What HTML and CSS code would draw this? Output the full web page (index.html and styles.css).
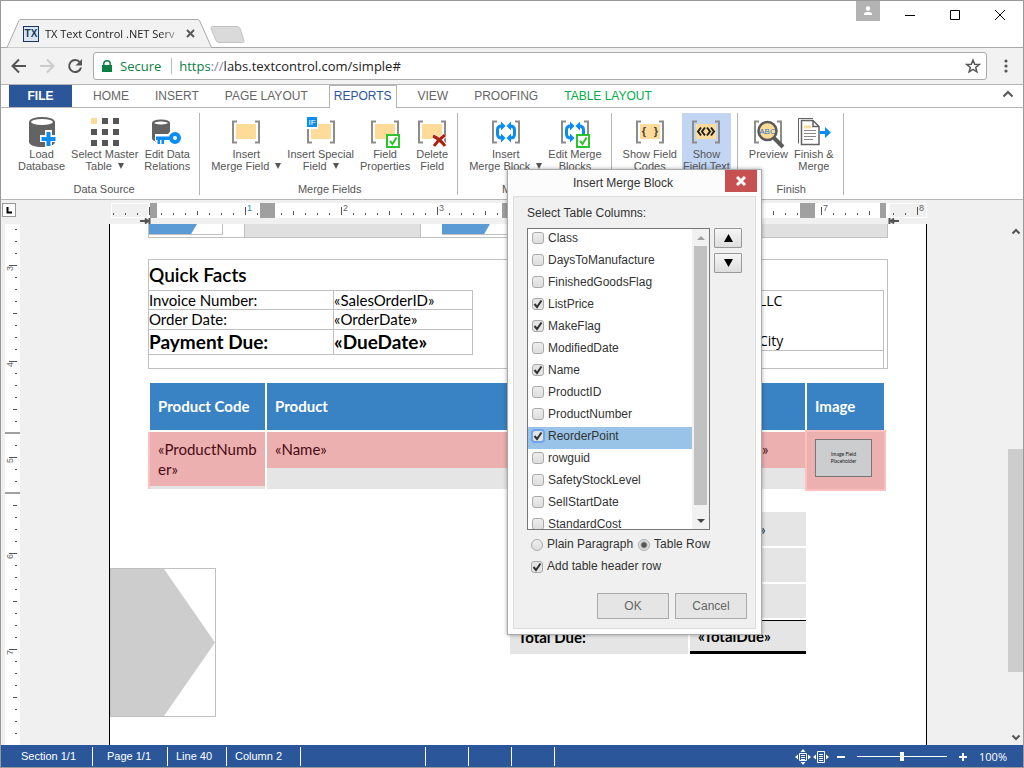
FILE: index.html
```html
<!DOCTYPE html>
<html lang="en">
<head>
  <meta charset="UTF-8">
  <meta name="viewport" content="width=device-width, initial-scale=1.0">
  <title>TX Text Control .NET Server</title>
  <link rel="stylesheet" href="styles.css">
</head>
<body>
  <svg class="defs" width="0" height="0" aria-hidden="true">
    <symbol id="brackets" viewBox="0 0 32 32">
      <path d="M7 5.500H3V26.500H7M25 5.500H29V26.500H25" fill="none" stroke="#8c8c8c" stroke-width="2"/>
    </symbol>
    <symbol id="field" viewBox="0 0 32 32">
      <use href="#brackets"/>
      <path d="M6 8h20v15H6z" fill="#ffdb99"/>
    </symbol>
    <symbol id="tickbox" viewBox="0 0 32 32">
      <path d="M18 19h12v12H18z" fill="#fff" stroke="#2ec22e" stroke-width="2"/>
      <path d="M21 25l2.500 3 4-6.500" fill="none" stroke="#2ec22e" stroke-width="2"/>
    </symbol>
    <symbol id="cycle" viewBox="0 0 32 32">
      <use href="#brackets"/>
      <path d="M12 22q-4.500 0-4.500-4v-4q0-4 4-4h1M20 10q4.500 0 4.500 4v4q0 4-4 4h-1" fill="none" stroke="#0a8cf0" stroke-width="3"/>
      <path d="M11 5.500l4.500 4.500-4.500 4.500zM21 17.500L16.500 22l4.500 4.500zM11 17.500l4.500 4.500-4.500 4.500zM21 5.500L16.500 10l4.500 4.500z" fill="#0a8cf0"/>
    </symbol>
    <symbol id="database" viewBox="0 0 32 32">
      <path d="M3 6v20c0 3 6 5 13 5s13-2 13-5V6z" fill="#636363"/>
      <ellipse cx="16" cy="6" rx="12" ry="4" fill="#fff" stroke="#636363" stroke-width="2"/>
    </symbol>
  </svg>

  <div class="window">
    <div class="titlebar">
      <div class="tab">
        <svg class="tab-shape" width="206" height="29" viewBox="0 0 206 29"><path d="M0 28.500h1L13 1.500Q13.500.5 15 .5h176q2 0 2.500 1l12 27" fill="#f2f2f2" stroke="#a9a9a9"/></svg>
        <span class="favicon">TX</span>
        <span class="tab-title">TX Text Control .NET Serv</span>
        <button class="tab-close" aria-label="Close tab"><svg width="9" height="9" viewBox="0 0 9 9"><path d="M1 1l7 7M8 1l-7 7" stroke="#5a5a5a" stroke-width="2"/></svg></button>
      </div>
      <button class="new-tab" aria-label="New tab"><svg width="36" height="18" viewBox="0 0 36 18"><path d="M3 .5h24q2 0 3 2l4 12q.5 2-1.500 2H9q-2 0-3-2L1 2.500Q.5.5 3 .5z" fill="#dadada" stroke="#c2c2c2"/></svg></button>
      <div class="window-buttons">
        <button class="profile" aria-label="Profile"><svg width="10" height="10" viewBox="0 0 10 10"><circle cx="5" cy="2.500" r="2.200" fill="#fff"/><path d="M1 9V8q0-2 4-2t4 2v1z" fill="#fff"/></svg></button>
        <button aria-label="Minimize"><svg width="10" height="10"><path d="M0 5.500h10" stroke="#000"/></svg></button>
        <button aria-label="Maximize"><svg width="10" height="10"><path d="M.5.5h9v9h-9z" fill="none" stroke="#000"/></svg></button>
        <button aria-label="Close"><svg width="10" height="10"><path d="M0 0l10 10M10 0L0 10" stroke="#000"/></svg></button>
      </div>
    </div>

    <div class="toolbar">
      <button aria-label="Back"><svg width="16" height="16" viewBox="0 0 16 16"><path d="M15 8H2M8 1.500L1.500 8 8 14.500" fill="none" stroke="#555" stroke-width="2"/></svg></button>
      <button aria-label="Forward"><svg width="16" height="16" viewBox="0 0 16 16"><path d="M1 8h13M8 1.500L14.500 8 8 14.500" fill="none" stroke="#ccc" stroke-width="2"/></svg></button>
      <button aria-label="Reload"><svg width="16" height="16" viewBox="0 0 16 16"><path d="M13 4.500A6 6 0 1 0 14 9.500" fill="none" stroke="#555" stroke-width="2"/><path d="M15 1v6.500H8.500z" fill="#555"/></svg></button>
      <div class="address">
        <svg width="10" height="12" viewBox="0 0 10 12"><path d="M0 5h1V4q0-4 4-4t4 4v1h1v7H0zM2.500 5h5V4q0-2.500-2.500-2.500T2.500 4z" fill="#0b8043"/></svg>
        <span class="secure">Secure</span>
        <label class="scheme" for="url">https<i>://</i></label>
        <input id="url" type="text" value="labs.textcontrol.com/simple#">
        <button aria-label="Bookmark"><svg width="16" height="16" viewBox="0 0 16 16"><path d="M8 2l1.700 4.200 4.500.3-3.500 2.900 1.200 4.400L8 11.400l-3.900 2.400 1.200-4.400L1.800 6.500l4.500-.3z" fill="none" stroke="#555" stroke-width="1.500"/></svg></button>
      </div>
      <button class="more" aria-label="Menu"><svg width="4" height="14" viewBox="0 0 4 14"><circle cx="2" cy="2" r="1.600" fill="#555"/><circle cx="2" cy="7" r="1.600" fill="#555"/><circle cx="2" cy="12" r="1.600" fill="#555"/></svg></button>
    </div>

    <nav class="ribbon-tabs">
      <a class="file" href="#">FILE</a>
      <a href="#">HOME</a>
      <a href="#">INSERT</a>
      <a href="#">PAGE LAYOUT</a>
      <a class="active" href="#">REPORTS</a>
      <a href="#">VIEW</a>
      <a href="#">PROOFING</a>
      <a class="context" href="#">TABLE LAYOUT</a>
      <button class="collapse" aria-label="Collapse ribbon"><svg width="12" height="8" viewBox="0 0 12 8"><path d="M1.500 6.500L6 2l4.500 4.500" fill="none" stroke="#555" stroke-width="2"/></svg></button>
    </nav>

    <div class="ribbon">
      <section class="group">
        <div class="tools">
          <button class="tool">
            <svg class="icon" viewBox="0 0 32 32"><use href="#database"/><path d="M19 14h7v5h5v7h-5v5h-7v-5h-5v-7h5z" fill="#fff"/><path d="M20.500 16h4v5h5v4h-5v5h-4v-5h-5v-4h5z" fill="#0a8cf0"/></svg>
            Load<br>Database
          </button>
          <button class="tool">
            <svg class="icon" viewBox="0 0 32 32"><path d="M2 2h6v6H2z" fill="#ffdb99"/><path d="M13 2h6v6h-6zM24 2h6v6h-6zM2 13h6v6H2zM13 13h6v6h-6zM24 13h6v6h-6zM2 24h6v6H2zM13 24h6v6h-6zM24 24h6v6h-6z" fill="#555"/></svg>
            Select Master<br>Table <i class="caret"></i>
          </button>
          <button class="tool">
            <svg class="icon" viewBox="0 0 32 32"><path d="M1 7v15c0 3 4 4 9 4s9-1 9-4V7z" fill="#636363"/><ellipse cx="10" cy="7" rx="8" ry="2.500" fill="#fff" stroke="#636363" stroke-width="2"/><path d="M4 18h13a7.500 7.500 0 1 1 0 8h-2v4H5v-5H4z" fill="#fff"/><circle cx="24" cy="22" r="4" fill="none" stroke="#0a8cf0" stroke-width="4"/><path d="M5 20.500h15v3.500h-7v4h-2.500v-4H9v4H6.500v-4H5z" fill="#0a8cf0"/></svg>
            Edit Data<br>Relations
          </button>
        </div>
        <h2>Data Source</h2>
      </section>

      <section class="group">
        <div class="tools">
          <button class="tool">
            <svg class="icon" viewBox="0 0 32 32"><use href="#field"/></svg>
            Insert<br>Merge Field <i class="caret"></i>
          </button>
          <button class="tool">
            <svg class="icon" viewBox="0 0 32 32"><use href="#field"/><path d="M1 0h12v13H1z" fill="#fff"/><path d="M2 1h10v10H2z" fill="#0a8cf0"/><text x="7" y="9" class="icon-if">IF</text></svg>
            Insert Special<br>Field <i class="caret"></i>
          </button>
          <button class="tool">
            <svg class="icon" viewBox="0 0 32 32"><use href="#field"/><use href="#tickbox"/></svg>
            Field<br>Properties
          </button>
          <button class="tool">
            <svg class="icon" viewBox="0 0 32 32"><use href="#field"/><path d="M17 20q7 3 12 10M29 19q-6 4-11 11" fill="none" stroke="#fff" stroke-width="5"/><path d="M17 20q7 3 12 10M29 19q-6 4-11 11" fill="none" stroke="#b02010" stroke-width="3"/></svg>
            Delete<br>Field
          </button>
        </div>
        <h2>Merge Fields</h2>
      </section>

      <section class="group">
        <div class="tools">
          <button class="tool">
            <svg class="icon" viewBox="0 0 32 32"><use href="#cycle"/></svg>
            Insert<br>Merge Block <i class="caret"></i>
          </button>
          <button class="tool">
            <svg class="icon" viewBox="0 0 32 32"><use href="#cycle"/><use href="#tickbox"/></svg>
            Edit Merge<br>Blocks
          </button>
        </div>
        <h2>Merge Blocks</h2>
      </section>

      <section class="group">
        <div class="tools">
          <button class="tool">
            <svg class="icon" viewBox="0 0 32 32"><use href="#field"/><text x="10" y="19" class="icon-code">{</text><text x="22" y="19" class="icon-code">}</text></svg>
            Show Field<br>Codes
          </button>
          <button class="tool pressed">
            <svg class="icon" viewBox="0 0 32 32"><use href="#field"/><path d="M15 11.500l-3 4 3 4M11 11.500l-3 4 3 4M17 11.500l3 4-3 4M21 11.500l3 4-3 4" fill="none" stroke="#222" stroke-width="2"/></svg>
            Show<br>Field Text
          </button>
        </div>
        <h2>View</h2>
      </section>

      <section class="group">
        <div class="tools">
          <button class="tool">
            <svg class="icon" viewBox="0 0 32 32"><use href="#brackets"/><path d="M22 22l9 9" stroke="#5a5a5a" stroke-width="4"/><circle cx="15.500" cy="15" r="9" fill="#ffdb99" stroke="#5a5a5a" stroke-width="2.500"/><text x="15.500" y="18" class="icon-abc">ABC</text></svg>
            Preview
          </button>
          <button class="tool">
            <svg class="icon" viewBox="0 0 32 32"><path d="M.5 27.500V2.500H15" fill="none" stroke="#636363"/><path d="M3.500 4.500H15l6 6v18h-17.500z" fill="#fff" stroke="#636363" stroke-width="1.500"/><path d="M15 4.500v6h6" fill="none" stroke="#636363" stroke-width="1.500"/><path d="M6 11h7" stroke="#ffdb99" stroke-width="3"/><path d="M6 14.500h12M6 17.500h12M6 20.500h12M6 23.500h9" stroke="#888"/><path d="M22 15h5v-4l6 5.500-6 5.500v-4h-5z" fill="#0a8cf0"/></svg>
            Finish &amp;<br>Merge
          </button>
        </div>
        <h2>Finish</h2>
      </section>
    </div>

    <div class="ruler-row">
      <button class="tab-stop" aria-label="Tab stop"><svg width="7" height="7"><path d="M1.500 0v5.500H6" fill="none" stroke="#000" stroke-width="2"/></svg></button>
      <div class="ruler-holder">
        <svg class="ruler" width="816" height="21" viewBox="0 0 816 21">
          <defs>
            <pattern id="inch" x="38" y="0" width="96" height="15" patternUnits="userSpaceOnUse">
              <path d="M.5 4v8M12.500 10v2M24.500 10v2M36.500 10v2M48.500 8v4M60.500 10v2M72.500 10v2M84.500 10v2" stroke="#555"/>
            </pattern>
          </defs>
          <path d="M0 0h816v15H0z" fill="#fff"/>
          <path d="M1 1h36v13H1zM779 1h36v13h-36z" fill="#f0f0f0"/>
          <path d="M0 0h816v15H0z" fill="url(#inch)"/>
          <path d="M39 0h7v15h-7zM149 0h15v15h-15zM391 0h15v15h-15zM689 0h15v15h-15zM769 0h6v15h-6z" fill="#a0a0a0"/>
          <text x="136" y="8" class="ruler-num blue">1</text>
          <text x="232" y="8" class="ruler-num">2</text>
          <text x="328" y="8" class="ruler-num">3</text>
          <text x="712" y="8" class="ruler-num">7</text>
          <text x="808" y="8" class="ruler-num">8</text>
          <path d="M29 18h8M34 15.500l3 2.500-3 2.500M38.500 15v6M778.500 15v6M780 18h8M783 15.500l-3 2.500 3 2.500" fill="none" stroke="#555" stroke-width="2"/>
        </svg>
      </div>
    </div>

    <main class="editor">
      <svg class="side-ruler" width="15" height="100%">
        <defs>
          <pattern id="side-inch" x="0" y="41" width="15" height="96" patternUnits="userSpaceOnUse">
            <path d="M4 .5h8M10 12.500h2M10 24.500h2M10 36.500h2M8 48.500h4M10 60.500h2M10 72.500h2M10 84.500h2" stroke="#555"/>
          </pattern>
        </defs>
        <rect width="15" height="100%" fill="#fff"/>
        <rect width="15" height="100%" fill="url(#side-inch)"/>
        <path d="M0 209h15M0 269h15" stroke="#a0a0a0" stroke-width="2"/>
        <text transform="translate(8 47) rotate(-90)" class="ruler-num">3</text>
        <text transform="translate(8 143) rotate(-90)" class="ruler-num">4</text>
        <text transform="translate(8 239) rotate(-90)" class="ruler-num">5</text>
        <text transform="translate(8 335) rotate(-90)" class="ruler-num">6</text>
        <text transform="translate(8 431) rotate(-90)" class="ruler-num">7</text>
      </svg>

      <div class="canvas">
        <article class="page">
          <div class="strip">
            <span class="strip-logo"></span>
            <span class="strip-cell"></span>
            <span class="strip-logo"></span>
            <span class="strip-cell wide"></span>
          </div>

          <section class="facts">
            <h3>Quick Facts</h3>
            <div class="facts-body">
              <table class="facts-table">
                <tr><td>Invoice Number:</td><td>«SalesOrderID»</td></tr>
                <tr><td>Order Date:</td><td>«OrderDate»</td></tr>
                <tr class="due"><td>Payment Due:</td><td>«DueDate»</td></tr>
              </table>
              <div class="ship">
                <p>LLC</p>
                <p>City</p>
              </div>
            </div>
          </section>

          <table class="products">
            <thead>
              <tr><th class="col-code">Product Code</th><th>Product</th><th class="col-total">Total</th><th class="col-image">Image</th></tr>
            </thead>
            <tbody>
              <tr>
                <td class="code">«ProductNumber»</td>
                <td class="merge">«Name»</td>
                <td class="merge">«LineTotal»</td>
                <td class="image"><div class="placeholder">Image Field<br>Placeholder</div></td>
              </tr>
            </tbody>
          </table>

          <div class="bottom">
            <div class="arrow"></div>
            <table class="totals">
              <tr><td>Subtotal:</td><td>«SubTotal»</td></tr>
              <tr><td>Tax:</td><td>«TaxAmt»</td></tr>
              <tr><td>Freight:</td><td>«Freight»</td></tr>
              <tr class="total"><td>Total Due:</td><td>«TotalDue»</td></tr>
            </table>
          </div>
        </article>
      </div>

      <div class="scrollbar">
        <svg width="10" height="7" viewBox="0 0 10 7"><path d="M1.500 5.500L5 2l3.500 3.500" fill="none" stroke="#555" stroke-width="2"/></svg>
        <div class="scroll-track"><div class="scroll-thumb"></div></div>
        <svg width="10" height="7" viewBox="0 0 10 7"><path d="M1.500 1.500L5 5l3.500-3.500" fill="none" stroke="#555" stroke-width="2"/></svg>
      </div>
    </main>

    <footer class="status">
      <span class="status-section">Section 1/1</span>
      <span class="status-page">Page 1/1</span>
      <span class="status-line">Line 40</span>
      <span class="status-column">Column 2</span>
      <span class="status-wide"></span>
      <span class="status-small"></span>
      <span class="status-small"></span>
      <span class="status-small"></span>
      <div class="zoom">
        <button aria-label="Fit page"><svg width="16" height="16" viewBox="0 0 16 16"><path d="M4.500 4.500h7v7h-7z" fill="none" stroke="#fff"/><path d="M6 6.500h4M6 8.500h4M6 10.500h4" stroke="#fff"/><path d="M8 0l2.500 3h-5zM8 16l2.500-3h-5zM0 8l3-2.500v5zM16 8l-3-2.500v5z" fill="#fff"/></svg></button>
        <button aria-label="Fit width"><svg width="16" height="16" viewBox="0 0 16 16"><path d="M4.500 2.500h7v11h-7z" fill="none" stroke="#fff"/><path d="M6 5.500h4M6 7.500h4M6 9.500h4M6 11.500h4" stroke="#fff"/><path d="M0 8l3-2.500v5zM16 8l-3-2.500v5z" fill="#fff"/></svg></button>
        <button class="zoom-step" aria-label="Zoom out"><svg width="8" height="8"><path d="M0 4h8" stroke="#fff" stroke-width="2"/></svg></button>
        <input type="range" min="10" max="190" value="100" aria-label="Zoom">
        <button class="zoom-step" aria-label="Zoom in"><svg width="8" height="8"><path d="M0 4h8M4 0v8" stroke="#fff" stroke-width="2"/></svg></button>
        <output>100%</output>
      </div>
    </footer>

    <div class="dialog" role="dialog" aria-labelledby="dialogTitle">
      <div class="dialog-head">
        <h2 id="dialogTitle">Insert Merge Block</h2>
        <button class="dialog-close" aria-label="Close"><svg width="10" height="10" viewBox="0 0 10 10"><path d="M1 1l8 8M9 1L1 9" stroke="#fff" stroke-width="3"/></svg></button>
      </div>
      <form class="dialog-body">
        <p class="caption">Select Table Columns:</p>
        <div class="columns">
          <div class="list">
            <div class="items">
              <label><input type="checkbox"> Class</label>
              <label><input type="checkbox"> DaysToManufacture</label>
              <label><input type="checkbox"> FinishedGoodsFlag</label>
              <label><input type="checkbox" checked> ListPrice</label>
              <label><input type="checkbox" checked> MakeFlag</label>
              <label><input type="checkbox"> ModifiedDate</label>
              <label><input type="checkbox" checked> Name</label>
              <label><input type="checkbox"> ProductID</label>
              <label><input type="checkbox"> ProductNumber</label>
              <label class="selected"><input type="checkbox" checked> ReorderPoint</label>
              <label><input type="checkbox"> rowguid</label>
              <label><input type="checkbox"> SafetyStockLevel</label>
              <label><input type="checkbox"> SellStartDate</label>
              <label><input type="checkbox"> StandardCost</label>
            </div>
            <div class="list-scroll">
              <i class="up"></i>
              <div class="list-thumb"></div>
              <i class="down"></i>
            </div>
          </div>
          <div class="order">
            <button type="button" aria-label="Move up"><svg width="9" height="8"><path d="M4.500 0L9 8H0z"/></svg></button>
            <button type="button" aria-label="Move down"><svg width="9" height="8"><path d="M0 0h9L4.500 8z"/></svg></button>
          </div>
        </div>
        <div class="option">
          <label><input type="radio" name="kind"> Plain Paragraph</label>
          <label><input type="radio" name="kind" checked> Table Row</label>
        </div>
        <div class="option">
          <label><input type="checkbox" checked> Add table header row</label>
        </div>
        <div class="actions">
          <button type="button">OK</button>
          <button type="button">Cancel</button>
        </div>
      </form>
    </div>
  </div>
</body>
</html>
```
FILE: styles.css
```css
* {
  box-sizing: border-box;
}
body {
  margin: 0;
  font-family: "Liberation Sans", Arial, sans-serif;
  font-size: 12px;
  color: #555;
}
button {
  display: flex;
  align-items: center;
  justify-content: center;
  margin: 0;
  padding: 0;
  border: none;
  background: none;
  font: inherit;
  color: inherit;
}
svg {
  flex: none;
}
h2, h3, p {
  margin: 0;
  font-weight: normal;
}
.defs {
  position: absolute;
}
.window {
  position: relative;
  display: flex;
  flex-direction: column;
  height: 100vh;
  overflow: hidden;
  border: 1px solid #999;
  background: #fff;
}

/* browser */
.titlebar {
  display: flex;
  align-items: flex-end;
  flex: none;
  height: 47px;
  padding-left: 5px;
  border-bottom: 1px solid #a9a9a9;
}
.tab {
  position: relative;
  display: flex;
  align-items: center;
  width: 206px;
  height: 29px;
  margin-bottom: -1px;
  padding: 0 17px;
  font-family: "Open Sans", sans-serif;
  font-size: 11px;
  color: #222;
}
.tab-shape {
  position: absolute;
  top: 0;
  left: 0;
}
.favicon {
  position: relative;
  width: 16px;
  height: 16px;
  margin-right: 6px;
  border: 1px solid #17375e;
  background: #dbe5f1;
  color: #17375e;
  font: bold 10px/14px "Liberation Sans", sans-serif;
  text-align: center;
}
.tab-title {
  position: relative;
  flex: 1;
  white-space: nowrap;
  -webkit-mask-image: linear-gradient(to right, #000 85%, rgba(0, 0, 0, 0.2));
  mask-image: linear-gradient(to right, #000 85%, rgba(0, 0, 0, 0.2));
}
.tab-close {
  position: relative;
  margin-left: 6px;
}
.new-tab {
  margin: 0 0 3px -2px;
}
.window-buttons {
  display: flex;
  align-self: flex-start;
  margin: 0 1px 0 auto;
}
.window-buttons button {
  width: 45px;
  height: 28px;
}
.window-buttons .profile {
  width: 24px;
  height: 20px;
  margin-right: 7px;
  background: #b3b3b3;
}
.toolbar {
  display: flex;
  align-items: center;
  gap: 12px;
  flex: none;
  height: 37px;
  padding: 0 15px 0 10px;
  border-bottom: 1px solid #b5b5b5;
  background: #f2f2f2;
}
.address {
  display: flex;
  align-items: center;
  flex: 1;
  height: 28px;
  margin: 0 5px 0 -2px;
  padding: 0 5px 0 8px;
  border: 1px solid #a9a9a9;
  border-radius: 3px;
  background: #fff;
  font-family: "Open Sans", sans-serif;
  font-size: 13px;
  color: #0b8043;
}
.secure {
  margin: 0 7px 0 8px;
  padding-right: 10px;
  border-right: 1px solid #bbb;
  line-height: 16px;
}
.scheme i {
  color: #888;
  font-style: normal;
}
.address input {
  flex: 1;
  min-width: 0;
  padding: 0;
  border: none;
  outline: none;
  font: inherit;
  color: #222;
}

/* ribbon */
.ribbon-tabs {
  display: flex;
  align-items: stretch;
  gap: 18px;
  flex: none;
  height: 23px;
  padding-left: 8px;
  border-bottom: 1px solid #b5b5b5;
}
.ribbon-tabs a {
  padding: 0 4px;
  line-height: 22px;
  color: #666;
  text-decoration: none;
}
.ribbon-tabs .file {
  width: 63px;
  margin-right: -1px;
  background: #2b579a;
  color: #fff;
  font-weight: bold;
  text-align: center;
}
.ribbon-tabs .active {
  margin: 0 -1px -1px;
  border: 1px solid #b5b5b5;
  border-bottom: none;
  background: #fff;
  line-height: 21px;
  color: #2b579a;
}
.ribbon-tabs .context {
  color: #00ad48;
}
.collapse {
  margin: 0 9px 4px auto;
}
.ribbon {
  display: flex;
  flex: none;
  height: 92px;
  padding: 5px 0 0 6px;
  border-bottom: 1px solid #b5b5b5;
  font-size: 11px;
  line-height: 12px;
}
.group {
  display: flex;
  flex-direction: column;
  height: 82px;
  padding: 0 6px 0 8px;
  border-right: 1px solid #b5b5b5;
}
.tools {
  display: flex;
  align-items: flex-start;
  flex: 1;
}
.tool {
  display: block;
  padding: 3px 3px 7px;
  text-align: center;
  white-space: nowrap;
}
.tool.pressed {
  margin-left: 2px;
  padding: 3px 1px 7px;
  background: #c2d5f2;
}
.group h2 {
  font-size: 11px;
  line-height: 12px;
  text-align: center;
}
.icon {
  display: block;
  width: 32px;
  height: 32px;
  margin: 0 auto;
  overflow: visible;
}
.icon-if {
  font-size: 8px;
  fill: #fff;
  text-anchor: middle;
}
.icon-abc {
  font-size: 8px;
  fill: #2e7cc7;
  text-anchor: middle;
}
.icon-code {
  font-size: 11px;
  font-weight: bold;
  fill: #444;
  text-anchor: middle;
}
.caret {
  display: inline-block;
  margin: 0 0 1px 3px;
  border: 3px solid transparent;
  border-top: 6px solid #555;
  border-bottom: none;
}

/* rulers */
.ruler-row {
  display: flex;
  flex: none;
  height: 24px;
  padding: 3px 15px 0 1px;
  background: #f0f0f0;
}
.tab-stop {
  width: 14px;
  height: 14px;
  border: 1px solid #999;
  background: #fff;
}
.ruler-holder {
  display: flex;
  justify-content: center;
  flex: 1;
  padding-left: 14px;
}
.ruler-num {
  font-size: 9px;
  fill: #666;
}
.ruler-num.blue {
  fill: #2e7cc7;
}
.editor {
  display: flex;
  flex: 1;
  min-height: 0;
  padding-left: 4px;
  background: #f0f0f0;
}
.canvas {
  flex: 1;
  overflow: hidden;
  padding-left: 8px;
}
.scrollbar {
  display: flex;
  flex-direction: column;
  align-items: center;
  width: 15px;
  padding: 4px 0;
}
.scroll-track {
  display: flex;
  flex-direction: column;
  align-self: stretch;
  justify-content: flex-end;
  flex: 1;
  padding-bottom: 62px;
}
.scroll-thumb {
  height: 51%;
  background: #cdcdcd;
}

/* document */
.page {
  width: 818px;
  height: 100%;
  margin: 0 auto;
  padding: 0 38px;
  border: solid #000;
  border-width: 0 1px;
  background: #fff;
  font-family: Lato, sans-serif;
  font-size: 15px;
  line-height: 20px;
  color: #222;
}
.strip {
  display: flex;
  gap: 21px;
  height: 14px;
  border: 1px solid #c0c0c0;
  border-top: none;
}
.strip-logo {
  width: 74px;
  height: 11px;
  border: 1px solid #c0c0c0;
  border-width: 0 1px 1px 0;
  background: linear-gradient(120deg, #5b9bd5 41px, transparent 42px);
}
.strip-cell {
  width: 177px;
  border: 1px solid #c0c0c0;
  border-width: 0 1px;
  background: #e0e0e0;
}
.strip-cell.wide {
  flex: 1;
  border-right: none;
}
.facts {
  margin-top: 21px;
  border: 1px solid #c0c0c0;
  color: #000;
}
.facts h3 {
  font-size: 19px;
  font-weight: 600;
  line-height: 30px;
}
.facts-body {
  display: flex;
  justify-content: space-between;
  padding-right: 3px;
}
.facts-table {
  width: 325px;
  height: 65px;
  margin: 0 0 13px -1px;
  border-collapse: collapse;
}
.facts-table td {
  padding: 0;
  border: 1px solid #c0c0c0;
  line-height: 18px;
}
.facts-table td:first-child {
  width: 185px;
}
.facts-table .due td {
  font-size: 19px;
  font-weight: bold;
  line-height: 24px;
}
.ship {
  display: flex;
  flex-direction: column;
  gap: 20px;
  width: 375px;
  height: 78px;
  border: 1px solid #c0c0c0;
  border-bottom: none;
  background: linear-gradient(#c0c0c0, #c0c0c0) 0 59px / 100% 1px no-repeat;
  font-family: "Open Sans", sans-serif;
  font-size: 14px;
  font-weight: 300;
}
.ship p {
  padding-left: 249px;
}
.products {
  width: 738px;
  margin-top: 12px;
  border-spacing: 2px;
  table-layout: fixed;
}
.products th {
  height: 47px;
  padding: 0 8px 1px;
  background: #3983c4;
  color: #fff;
  text-align: left;
}
.products .col-code, .products .col-total {
  width: 115px;
}
.products .col-image {
  width: 77px;
}
.products td {
  height: 57px;
  padding: 7px 8px 10px;
  vertical-align: top;
  background: #e5e5e5;
  color: #4a0a14;
}
.products .code {
  background: linear-gradient(#ecb0b0 54px, #e5e5e5 54px);
  box-shadow: -2px 0 #ffbfbf;
  word-break: break-all;
}
.products .merge {
  background: linear-gradient(#ecb0b0 36px, #e5e5e5 36px);
}
.products .image {
  background: #ecb0b0;
  box-shadow: 0 0 0 2px #ffbfbf;
}
.placeholder {
  display: flex;
  align-items: center;
  justify-content: center;
  width: 57px;
  height: 38px;
  border: 1px solid #777;
  background: #cbcdcf;
  color: #222;
  font-size: 5px;
  line-height: 7px;
  text-align: center;
}
.bottom {
  display: flex;
  align-items: flex-start;
  margin-top: 19px;
}
.arrow {
  width: 106px;
  height: 149px;
  margin: 58px 292px 0 -38px;
  border: 1px solid #c0c0c0;
}
.arrow::before {
  content: "";
  display: block;
  height: 100%;
  background: #cdcdcd;
  clip-path: polygon(0 0, 51% 0, 100% 50%, 51% 100%, 0 100%);
}
.totals {
  width: 300px;
  border-spacing: 2px;
}
.totals td {
  height: 34px;
  padding: 0 8px;
  background: #e5e5e5;
  color: #234;
}
.totals td:first-child {
  width: 178px;
}
.totals .total td {
  font-weight: bold;
  color: #000;
}
.totals .total td:last-child {
  border-top: 1px solid #000;
  border-bottom: 3px solid #000;
}

/* status bar */
.status {
  display: flex;
  align-items: stretch;
  flex: none;
  height: 22px;
  padding: 2px 16px 1px 5px;
  background: #2b579a;
  color: #fff;
  font-size: 11px;
  line-height: 18px;
}
.status span {
  padding: 0 8px;
  border-right: 1px solid #fff;
}
.status .status-section {
  width: 87px;
  padding-left: 15px;
}
.status .status-page {
  width: 75px;
  padding-left: 14px;
}
.status .status-line {
  width: 59px;
}
.status .status-column {
  width: 74px;
}
.status .status-wide {
  width: 125px;
}
.status-small {
  width: 43px;
}
.zoom {
  display: flex;
  align-items: center;
  gap: 2px;
  margin-left: auto;
}
.zoom .zoom-step {
  width: 20px;
}
.zoom input {
  width: 90px;
  height: 9px;
  margin: 0 4px;
  -webkit-appearance: none;
  appearance: none;
  background: linear-gradient(#fff, #fff) 0 4px / 100% 1px no-repeat;
}
.zoom input::-webkit-slider-thumb {
  -webkit-appearance: none;
  width: 4px;
  height: 9px;
  background: #fff;
}
.zoom output {
  margin-left: 4px;
  font-family: "Open Sans", sans-serif;
}

/* dialog */
.dialog {
  position: absolute;
  top: 168px;
  left: 506px;
  width: 255px;
  padding: 0 5px 5px;
  border: 1px solid #aaa;
  background: #fcfcfc;
  box-shadow: 0 0 4px rgba(0, 0, 0, 0.35);
  color: #333;
}
.dialog-head {
  display: flex;
  height: 26px;
}
.dialog-head h2 {
  flex: 1;
  padding-left: 8px;
  font-size: 12px;
  line-height: 26px;
  text-align: center;
}
.dialog-close {
  width: 32px;
  height: 22px;
  margin-right: -1px;
  background: #c75050;
}
.dialog-body {
  padding: 9px 8px 9px 13px;
  border: 1px solid #ddd;
  background: #f0f0f0;
}
.caption {
  line-height: 15px;
}
.columns {
  display: flex;
  gap: 4px;
  margin-top: 7px;
}
.list {
  display: flex;
  width: 183px;
  height: 302px;
  overflow: hidden;
  border: 1px solid #777;
  background: #fff;
}
.items {
  flex: 1;
}
.items label {
  display: flex;
  align-items: center;
  gap: 4px;
  height: 22px;
  padding: 0 0 5px 4px;
}
.items .selected {
  background: #99c4e8;
}
.dialog input {
  width: 12px;
  height: 12px;
  margin: 0;
  -webkit-appearance: none;
  appearance: none;
  border: 1px solid #aaa;
  border-radius: 3px;
  background: linear-gradient(#ededed, #dedede);
}
.dialog input[type="checkbox"]:checked {
  background: url("data:image/svg+xml,%3Csvg xmlns='http://www.w3.org/2000/svg' viewBox='0 0 10 10'%3E%3Cpath d='M1.500 5l2.500 3 4.500-6.500' fill='none' stroke='%23333' stroke-width='2'/%3E%3C/svg%3E") center / 10px no-repeat, #e4e4e4;
}
.dialog .selected input {
  border-color: #6ea3ee;
  box-shadow: 0 0 0 1px #6ea3ee;
}
.dialog input[type="radio"] {
  border-radius: 50%;
}
.dialog input[type="radio"]:checked {
  background: radial-gradient(#555 2px, #e4e4e4 4px);
}
.list-scroll {
  display: flex;
  flex-direction: column;
  align-items: center;
  gap: 6px;
  width: 17px;
  padding: 7px 2px 6px;
  background: #f1f1f1;
}
.list-thumb {
  align-self: stretch;
  flex: 1;
  margin-bottom: 8px;
  background: #c1c1c1;
}
.up, .down {
  border: 4px solid transparent;
  border-top: none;
  border-bottom: 4px solid #a0a0a0;
}
.down {
  border-bottom: none;
  border-top: 4px solid #444;
}
.order {
  display: flex;
  flex-direction: column;
  gap: 5px;
}
.order button {
  width: 28px;
  height: 20px;
  border: 1px solid #999;
  border-radius: 1px;
  background: linear-gradient(#f6f6f6, #dedede);
}
.option {
  display: flex;
  gap: 5px;
  margin-top: 7px;
  padding-left: 4px;
  line-height: 15px;
}
.option label {
  display: flex;
  align-items: center;
  gap: 4px;
}
.actions {
  display: flex;
  justify-content: flex-end;
  gap: 6px;
  margin-top: 19px;
}
.actions button {
  width: 72px;
  height: 26px;
  border: 1px solid #aaa;
  background: #e5e5e5;
  color: #666;
}
```
